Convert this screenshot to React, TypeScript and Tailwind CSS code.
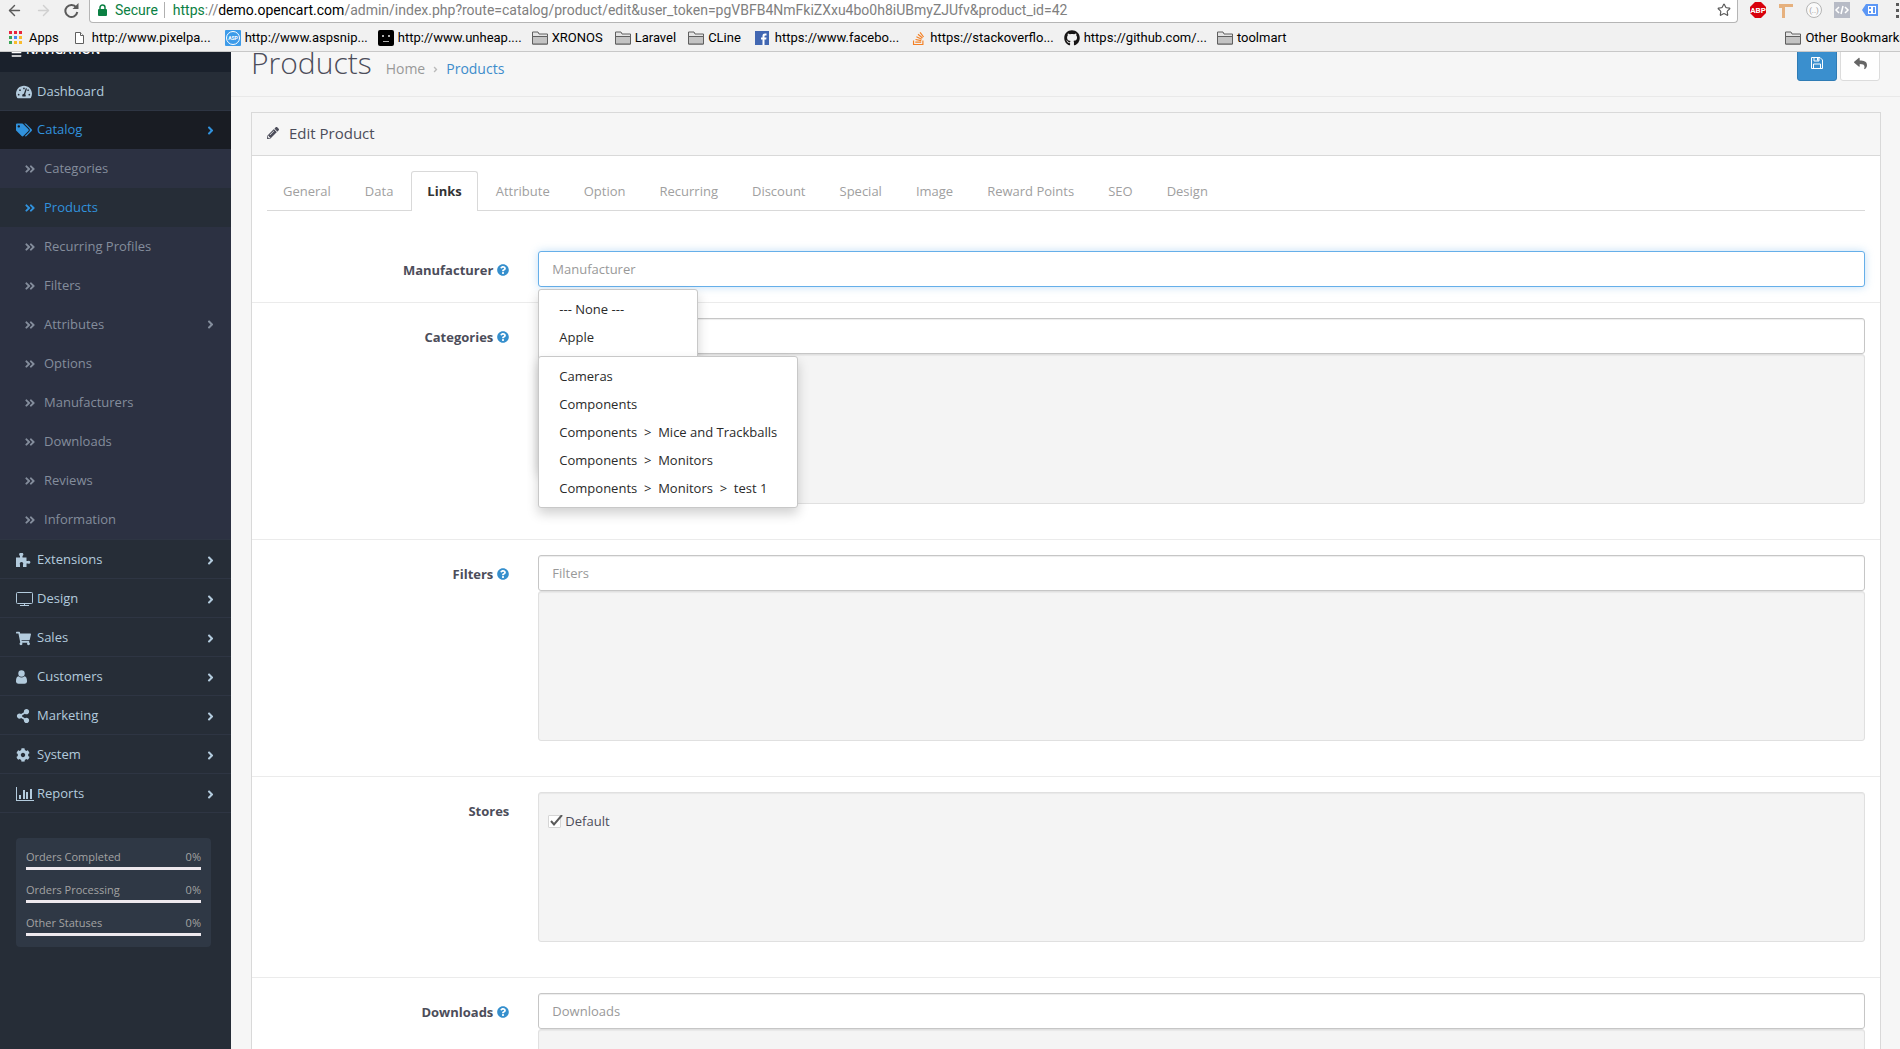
import React from 'react';
import {
  FaTachometerAlt, FaTags, FaShoppingCart, FaShareAlt, FaCog,
  FaPencilAlt, FaReply, FaQuestionCircle, FaStackOverflow, FaGithub,
  FaAngleRight, FaAngleDoubleRight, FaBars,
} from 'react-icons/fa';
import { ArrowLeft, ArrowRight, Star } from 'lucide-react';

const PuzzleIcon = () => (
  <svg width="15" height="14" viewBox="0 0 15 14" fill="currentColor">
    <path d="M0 4.500h4V3a2 2 0 1 1 2.500 0v1.500h4V8h1.500a1.500 1.500 0 1 1 0 2.500h-1.500V14H7v-2.500a1.700 1.700 0 1 0-3 0V14H0z" />
  </svg>
);

const MonitorIcon = () => (
  <svg width="17" height="14" viewBox="0 0 17 14" fill="none" stroke="currentColor">
    <rect x="0.5" y="0.5" width="16" height="11" rx="1" />
    <path d="M4 13.5h9M8.5 12v1" />
  </svg>
);

const UserIcon = () => (
  <svg width="11" height="14" viewBox="0 0 11 14" fill="currentColor">
    <circle cx="5.500" cy="3.500" r="3.200" />
    <path d="M2.500 6.200a4.500 4.500 0 0 0 6 0C10.300 6.500 11 8.500 11 11a2.500 2.500 0 0 1-2.500 2.700h-6A2.500 2.500 0 0 1 0 11c0-2.500.7-4.500 2.500-4.800z" />
  </svg>
);

const ChartIcon = () => (
  <svg width="18" height="14" viewBox="0 0 18 14" fill="currentColor">
    <path d="M0 0h1v13h17v1H0zM3 8h2v4H3zM7 3h2v9H7zM10 5h2v7h-2zM14 2h2v10h-2z" />
  </svg>
);

const FolderIcon = () => (
  <svg width="16" height="14" viewBox="0 0 16 14" className="shrink-0">
    <path d="M.5 13V1h5.500l1 2h8.500v10z" fill="#e4e4e4" stroke="#5f5f5f" />
    <path d="M.5 5.500h15V13H.5z" fill="#c3c3c3" stroke="#5f5f5f" />
  </svg>
);

const SaveIcon = () => (
  <svg width="12" height="12" viewBox="0 0 12 12" fill="none" stroke="white">
    <path d="M.5.500h8.500l2.500 2.500v8.500H.5z" />
    <path d="M3 .5v3.500h5V.5M2.500 11.500V7h7v4.500" />
    <path d="M6 1h1.500v2.500H6z" fill="white" stroke="none" />
  </svg>
);

const appColors = ['#e8253c', '#e8253c', '#e8253c', '#3aa757', '#4688f1', '#f9bb2d', '#3aa757', '#f9bb2d', '#f9bb2d'];

const bookmarks = [
  {
    label: 'Apps',
    icon: (
      <svg width="14" height="14" viewBox="0 0 14 14" className="mr-0.5">
        {appColors.map((color, i) => (
          <rect key={i} x={(i % 3) * 5} y={Math.floor(i / 3) * 5} width="3" height="3" fill={color} />
        ))}
      </svg>
    ),
    gap: 'mr-4',
  },
  {
    label: 'http://www.pixelpa...',
    icon: (
      <svg width="9" height="12" viewBox="0 0 9 12" fill="white" stroke="#5f5f5f" className="mr-1">
        <path d="M.5.500h5l3 3v8H.5z" />
        <path d="M5.500.500v3h3" />
      </svg>
    ),
    gap: 'mr-3.5',
  },
  {
    label: 'http://www.aspsnip...',
    icon: (
      <svg width="16" height="16" viewBox="0 0 16 16">
        <rect width="16" height="16" rx="1" fill="#3d9be9" />
        <circle cx="8" cy="8" r="6.500" fill="none" stroke="white" />
        <text x="8" y="10" textAnchor="middle" fontSize="5" fontWeight="bold" fill="white" fontFamily="Roboto, sans-serif">ASP</text>
      </svg>
    ),
    gap: 'mr-2.5',
  },
  {
    label: 'http://www.unheap....',
    icon: (
      <svg width="16" height="16" viewBox="0 0 16 16">
        <rect width="16" height="16" rx="2" fill="#000" />
        <path d="M4 5h2v2H4zM10 5h2v2h-2zM5 11h6v1H5z" fill="#b0b0b0" />
      </svg>
    ),
    gap: 'mr-2.5',
  },
  { label: 'XRONOS', icon: <FolderIcon />, gap: 'mr-3' },
  { label: 'Laravel', icon: <FolderIcon />, gap: 'mr-3' },
  { label: 'CLine', icon: <FolderIcon />, gap: 'mr-3.5' },
  {
    label: 'https://www.facebo...',
    icon: (
      <svg width="14" height="14" viewBox="0 0 14 14" className="mr-0.5">
        <rect width="14" height="14" fill="#4267b2" />
        <path d="M7.500 14V8.500H6v-2h1.500V5c0-1.700 1-2.500 2.500-2.500h1.500v2h-1c-.7 0-1 .3-1 1v1h2l-.3 2H9.500V14z" fill="white" />
      </svg>
    ),
    gap: 'mr-3',
  },
  { label: 'https://stackoverflo...', icon: <FaStackOverflow size={15} color="#f48024" />, gap: 'mr-2.5' },
  { label: 'https://github.com/...', icon: <FaGithub size={16} color="#171515" />, gap: 'mr-2.5' },
  { label: 'toolmart', icon: <FolderIcon />, gap: '' },
];

const catalogItems = [
  'Categories', 'Products', 'Recurring Profiles', 'Filters', 'Attributes',
  'Options', 'Manufacturers', 'Downloads', 'Reviews', 'Information',
];

const menuItems = [
  { label: 'Extensions', icon: <PuzzleIcon /> },
  { label: 'Design', icon: <MonitorIcon /> },
  { label: 'Sales', icon: <FaShoppingCart size={15} /> },
  { label: 'Customers', icon: <UserIcon /> },
  { label: 'Marketing', icon: <FaShareAlt size={14} /> },
  { label: 'System', icon: <FaCog size={14} /> },
  { label: 'Reports', icon: <ChartIcon /> },
];

const stats = [
  { label: 'Orders Completed', value: '0%' },
  { label: 'Orders Processing', value: '0%' },
  { label: 'Other Statuses', value: '0%' },
];

const tabs = [
  'General', 'Data', 'Links', 'Attribute', 'Option', 'Recurring',
  'Discount', 'Special', 'Image', 'Reward Points', 'SEO', 'Design',
];

const manufacturerOptions = ['--- None ---', 'Apple'];

const categoryOptions = [
  'Cameras',
  'Components',
  'Components\u00a0\u00a0>\u00a0\u00a0Mice and Trackballs',
  'Components\u00a0\u00a0>\u00a0\u00a0Monitors',
  'Components\u00a0\u00a0>\u00a0\u00a0Monitors\u00a0\u00a0>\u00a0\u00a0test 1',
];

const BrowserBar = () => (
  <header className="relative z-30 h-[52px] shrink-0 overflow-hidden border-b border-[#c8c8c8] bg-[#f1f1f1] font-[Roboto,sans-serif] text-black">
    <div className="flex h-[23px] items-start">
      <div className="flex w-[89px] shrink-0 items-center gap-3 pl-1.5 pt-0.5">
        <button aria-label="Back"><ArrowLeft size={17} color="#5a5a5a" /></button>
        <button aria-label="Forward"><ArrowRight size={17} color="#d0d0d0" /></button>
        <button aria-label="Reload">
          <svg width="15" height="15" viewBox="0 0 15 15" fill="none" stroke="#5a5a5a" strokeWidth="2">
            <path d="M12.300 4.500A6 6 0 1 0 13.300 9" />
            <path d="M14.500 0v6h-6z" fill="#5a5a5a" stroke="none" />
          </svg>
        </button>
      </div>
      <div className="flex h-[23px] min-w-0 flex-1 items-center rounded-b border border-t-0 border-[#b5b5b5] bg-white pb-0.5 pl-2 pr-1.5 text-[14px] leading-5">
        <svg width="9" height="12" viewBox="0 0 9 12" className="mr-2 shrink-0">
          <rect y="5" width="9" height="7" rx="1" fill="#0b8043" />
          <path d="M2 5.500V3.500a2.500 2.500 0 0 1 5 0v2" fill="none" stroke="#0b8043" strokeWidth="1.500" />
        </svg>
        <span className="text-[#0b8043]">Secure</span>
        <span className="ml-1.5 mr-2 h-4 w-px bg-[#b0b0b0]" />
        <span className="flex-1 truncate text-[#808080]">
          <span className="text-[#0b8043]">https</span>://<span className="text-black">demo.opencart.com</span>
          /admin/index.php?route=catalog/product/edit&amp;user_token=pgVBFB4NmFkiZXxu4bo0h8iUBmyZJUfv&amp;product_id=42
        </span>
        <button aria-label="Bookmark this page"><Star size={14} color="#5a5a5a" /></button>
      </div>
      <div className="flex w-[162px] shrink-0 items-center pl-3 pt-0.5">
        <svg width="162" height="17" viewBox="0 0 162 17" className="shrink-0">
          <path d="M5 0h6l5 5v6l-5 5H5l-5-5V5z" fill="#d8000c" />
          <text x="8" y="11" textAnchor="middle" fontSize="8" fontWeight="bold" fill="white" fontFamily="Roboto, sans-serif">ABP</text>
          <path d="M29 2h14v3H35v11h-3V6h-3z" fill="#e6b17e" />
          <circle cx="64" cy="8" r="7.500" fill="#fafafa" stroke="#b5b5b5" />
          <text x="64" y="11" textAnchor="middle" fontSize="8" fill="#a0a0a0" fontFamily="Roboto, sans-serif">(..)</text>
          <rect x="84" width="16" height="16" fill="#b7bbc6" />
          <path d="M89 5l-3 3 3 3M95 5l3 3-3 3M93 4l-2 8" fill="none" stroke="white" strokeWidth="1.500" />
          <path d="M112 8l4-6h12v12h-12z" fill="#5c97f5" />
          <path d="M118 4h8v8h-8z" fill="white" />
          <path d="M119 5h2v2h-2zM119 9h2v2h-2zM123 5h2v6h-2z" fill="#5c97f5" />
          <path d="M146 1h3v3h-3zM146 7h3v3h-3zM146 13h3v3h-3z" fill="#5a5a5a" />
        </svg>
      </div>
    </div>
    <nav className="flex h-7 items-center whitespace-nowrap pl-[9px] pt-0.5 text-[13px] leading-4">
      {bookmarks.map(b => (
        <a key={b.label} href="#" className={`flex items-center gap-1 ${b.gap}`}>
          {b.icon}
          {b.label}
        </a>
      ))}
      <a href="#" className="-mr-1.5 ml-auto flex items-center gap-1"><FolderIcon />Other Bookmarks</a>
    </nav>
  </header>
);

const Sidebar = () => (
  <aside className="w-[231px] shrink-0 bg-[#262d37] text-[#b3cbdd]">
    <div className="flex h-5 items-end gap-1 overflow-hidden bg-[#1a212c] pb-3.5 pl-[11px] text-[12px] leading-4 font-semibold text-white">
      <FaBars size={11} />
      NAVIGATION
    </div>
    <nav className="text-[13px] font-medium">
      <a href="#" className="flex h-[39px] items-center gap-[5px] border-b border-[#2e3543] pl-4 pt-0.5">
        <FaTachometerAlt size={16} />
        Dashboard
      </a>
      <a href="#" className="flex h-[38px] items-center gap-[5px] bg-[#191c23] pl-4 text-[#3192dd]">
        <FaTags size={16} />
        Catalog
        <FaAngleRight size={13} className="ml-auto mr-3.5" />
      </a>
      <div className="bg-[#2c3142] font-normal text-[#848d9c]">
        {catalogItems.map(item => (
          <a
            key={item}
            href="#"
            className={`flex h-[39px] items-center gap-2 pl-6 ${item === 'Products' ? 'bg-[#262d37] text-[#3192dd]' : ''}`}
          >
            <FaAngleDoubleRight size={12} />
            {item}
            {item === 'Attributes' && <FaAngleRight size={13} className="ml-auto mr-3.5" />}
          </a>
        ))}
      </div>
      <div className="border-t border-[#2e3543]">
        {menuItems.map(item => (
          <a key={item.label} href="#" className="flex h-[39px] items-center border-b border-[#2e3543] pl-4 pt-0.5">
            <span className="w-[21px] shrink-0">{item.icon}</span>
            {item.label}
            <FaAngleRight size={13} className="ml-auto mr-3.5" />
          </a>
        ))}
      </div>
    </nav>
    <div className="ml-4 mt-[25px] mr-5 flex flex-col gap-3 rounded-sm bg-[#2f3845] px-2.5 py-[11px] text-[11px] leading-4 text-[#a3a3a3]">
      {stats.map(stat => (
        <div key={stat.label}>
          <div className="flex justify-between">
            <span>{stat.label}</span>
            <span>{stat.value}</span>
          </div>
          <div className="mt-0.5 h-[3px] bg-[#eee9ee]" />
        </div>
      ))}
    </div>
  </aside>
);

interface FieldRowProps {
  label: string;
  id?: string;
  help?: boolean;
  first?: boolean;
  children: React.ReactNode;
}

const FieldRow = ({ label, id, help = true, first, children }: FieldRowProps) => (
  <div className={`flex py-[15px] ${first ? '' : 'border-t border-[#ebebeb]'}`}>
    <label htmlFor={id} className="flex w-1/6 shrink-0 items-center justify-end gap-1 self-start pr-3.5 pt-[11px] text-[13px] leading-4 font-bold text-[#4c4d5a]">
      {label}
      {help && <FaQuestionCircle size={12} color="#358fcd" />}
    </label>
    <div className="relative min-w-0 flex-1 px-[15px]">{children}</div>
  </div>
);

const inputClass =
  'block h-9 w-full rounded-[3px] border px-[13px] text-[13px] text-[#555] outline-none placeholder:text-[#999] bg-white';
const plainInput = `${inputClass} border-[#c6c6c6] shadow-[inset_0_1px_1px_rgba(0,0,0,0.075)]`;

const Well = ({ children }: { children?: React.ReactNode }) => (
  <div className="mb-5 h-[150px] rounded-[3px] border border-[#e0e0e0] bg-[#f4f4f4] px-[9px] shadow-[inset_0_1px_1px_rgba(0,0,0,0.05)]">
    {children}
  </div>
);

const DropMenu = ({ options, className }: { options: string[]; className: string }) => (
  <ul className={`absolute left-[15px] rounded-[3px] border border-[#c8c8c8] bg-white py-[5px] text-[13px] leading-7 text-[#2a2a2a] shadow-[0_6px_12px_rgba(0,0,0,0.18)] ${className}`}>
    {options.map(option => (
      <li key={option}>
        <a href="#" className="block whitespace-nowrap px-5">{option}</a>
      </li>
    ))}
  </ul>
);

export default function App() {
  return (
    <div className="flex h-screen flex-col overflow-hidden bg-[#f6f6f6] font-['Open_Sans',sans-serif]">
      <BrowserBar />
      <div className="flex min-h-0 flex-1">
        <Sidebar />
        <main className="min-w-0 flex-1 overflow-hidden">
          <div className="flex h-[45px] items-end overflow-hidden border-b border-[#e9e9e9] pb-[15px] pl-5 pr-5">
            <h1 className="text-[30px] leading-9 font-light text-[#4c4d5a]">Products</h1>
            <div className="ml-3.5 flex items-center gap-1.5 text-[14px] leading-6">
              <a href="#" className="text-[#999]">Home</a>
              <FaAngleRight size={9} color="#bbb" />
              <a href="#" className="text-[#3d8ccb]">Products</a>
            </div>
            <div className="ml-auto flex gap-[3px]">
              <button aria-label="Save" className="flex h-9 w-10 items-center justify-center rounded-[3px] border border-[#2f7cb5] bg-[#3a8fce]">
                <SaveIcon />
              </button>
              <button aria-label="Cancel" className="flex h-9 w-10 items-center justify-center rounded-[3px] border border-[#dcdcdc] bg-white text-[#666]">
                <FaReply size={13} />
              </button>
            </div>
          </div>
          <section className="mt-[15px] ml-5 mr-[19px] border border-[#d9d9d9] bg-white">
            <h3 className="flex h-[43px] items-center gap-2.5 border-b border-[#d9d9d9] bg-[#f6f6f6] pb-0.5 pl-[15px] text-[15px] text-[#4c4d5a]">
              <FaPencilAlt size={12} />
              Edit Product
            </h3>
            <div className="mx-[15px] flex h-[55px] items-end gap-0.5 border-b border-[#d9d9d9] text-[13px]">
              {tabs.map(tab => (
                <button
                  key={tab}
                  className={
                    tab === 'Links'
                      ? '-mb-px h-10 rounded-t-[3px] border border-b-0 border-[#d9d9d9] bg-white px-[15px] font-bold text-[#333]'
                      : 'h-[39px] px-4 pt-0.5 text-[#a0a0a0]'
                  }
                >
                  {tab}
                </button>
              ))}
            </div>
            <form className="pt-[25px]">
              <FieldRow label="Manufacturer" id="manufacturer" first>
                <input
                  id="manufacturer"
                  placeholder="Manufacturer"
                  className={`${inputClass} border-[#66afe9] shadow-[0_0_8px_rgba(102,175,233,0.4)]`}
                />
                <DropMenu options={manufacturerOptions} className="top-[38px] z-10 h-[180px] w-[160px]" />
              </FieldRow>
              <FieldRow label="Categories" id="categories">
                <input id="categories" className={plainInput} />
                <Well />
                <DropMenu options={categoryOptions} className="top-[38px] z-20" />
              </FieldRow>
              <FieldRow label="Filters" id="filters">
                <input id="filters" placeholder="Filters" className={plainInput} />
                <Well />
              </FieldRow>
              <FieldRow label="Stores" id="store-default" help={false}>
                <Well>
                  <label className="flex items-center gap-1 pt-[18px] text-[13px] leading-5 text-[#4c4d5a]">
                    <span className="relative flex">
                      <input
                        id="store-default"
                        type="checkbox"
                        defaultChecked
                        className="peer h-[13px] w-[13px] appearance-none rounded-[1px] border border-[#d6d6d6] bg-white"
                      />
                      <svg width="14" height="13" viewBox="0 0 14 13" className="pointer-events-none absolute left-px top-0 hidden peer-checked:block">
                        <path d="M2 6l3 3.500L13 0" fill="none" stroke="#5a5a5a" strokeWidth="2" />
                      </svg>
                    </span>
                    Default
                  </label>
                </Well>
              </FieldRow>
              <FieldRow label="Downloads" id="downloads">
                <input id="downloads" placeholder="Downloads" className={plainInput} />
                <Well />
              </FieldRow>
            </form>
          </section>
        </main>
      </div>
    </div>
  );
}
